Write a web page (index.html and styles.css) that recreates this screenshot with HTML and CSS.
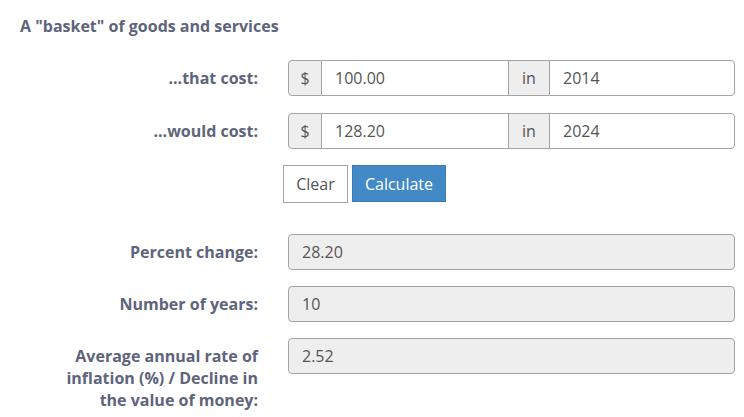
FILE: index.html
```html
<!DOCTYPE html>
<html>
<head>
<meta charset="utf-8">
<link rel="stylesheet" href="styles.css">
</head>
<body>
<div class="calc">
  <h3 class="title">A "basket" of goods and services</h3>
  <div class="row">
    <label class="label">...that cost:</label>
    <div class="group">
      <span class="addon addon-first">$</span>
      <span class="field field-amount">100.00</span>
      <span class="addon addon-in">in</span>
      <span class="field field-year">2014</span>
    </div>
  </div>
  <div class="row">
    <label class="label">...would cost:</label>
    <div class="group">
      <span class="addon addon-first">$</span>
      <span class="field field-amount">128.20</span>
      <span class="addon addon-in">in</span>
      <span class="field field-year">2024</span>
    </div>
  </div>
  <div class="row row-buttons">
    <div></div>
    <div class="buttons">
      <button class="btn btn-clear">Clear</button>
      <button class="btn btn-calc">Calculate</button>
    </div>
  </div>
  <div class="results">
    <div class="row">
      <label class="label">Percent change:</label>
      <div class="output">28.20</div>
    </div>
    <div class="row">
      <label class="label">Number of years:</label>
      <div class="output">10</div>
    </div>
    <div class="row">
      <label class="label">Average annual rate of inflation (%) / Decline in the value of money:</label>
      <div class="output">2.52</div>
    </div>
  </div>
</div>
</body>
</html>
```
FILE: styles.css
```css
html, body {
  margin: 0;
  padding: 0;
  background: #ffffff;
}
body {
  font-family: "Open Sans", "Liberation Sans", sans-serif;
  color: #555555;
}
.calc {
  width: 735px;
  padding-left: 20px;
  box-sizing: border-box;
}
.title {
  margin: 0;
  padding-top: 15px;
  font-size: 16px;
  line-height: 22px;
  font-weight: 700;
  color: #5e647b;
  margin-bottom: 23px;
}
.row {
  display: grid;
  grid-template-columns: 205px 447px;
  column-gap: 30px;
  padding-left: 33px;
  margin-bottom: 17px;
}
.label {
  text-align: right;
  font-size: 16px;
  line-height: 22px;
  font-weight: 700;
  color: #5e647b;
  padding-top: 7px;
}
.group {
  display: flex;
  height: 36px;
}
.addon, .field {
  box-sizing: border-box;
  height: 36px;
  border: 1px solid #a3a3a3;
  font-size: 16px;
  line-height: 34px;
}
.addon {
  background: #eeeeee;
  text-align: center;
  color: #555555;
}
.addon-first {
  width: 34px;
  border-radius: 4px 0 0 4px;
}
.addon-in {
  width: 40px;
  border-left: none;
  border-right: none;
}
.field {
  background: #ffffff;
  padding-left: 13px;
  color: #555555;
}
.field-amount {
  width: 187px;
  border-left: none;
}
.field-year {
  flex: 1;
  border-radius: 0 4px 4px 0;
}
.row-buttons {
  margin-bottom: 31px;
}
.buttons {
  display: flex;
  gap: 4px;
  margin-left: -5px;
  margin-top: -1px;
}
.btn {
  box-sizing: border-box;
  height: 38px;
  font-family: "Open Sans", "Liberation Sans", sans-serif;
  font-size: 16px;
  padding: 0;
  border-radius: 0;
  cursor: pointer;
}
.btn-clear {
  background: #ffffff;
  border: 1px solid #a3a3a3;
  color: #555555;
  width: 65px;
}
.btn-calc {
  background: #4289c8;
  border: 1px solid #3a7bb6;
  color: #ffffff;
  width: 94px;
  height: 37px;
}
.output {
  box-sizing: border-box;
  height: 36px;
  background: #eeeeee;
  border: 1px solid #a3a3a3;
  border-radius: 4px;
  padding-left: 13px;
  font-size: 16px;
  line-height: 34px;
  color: #555555;
}
.results .row {
  margin-bottom: 16px;
}
```
